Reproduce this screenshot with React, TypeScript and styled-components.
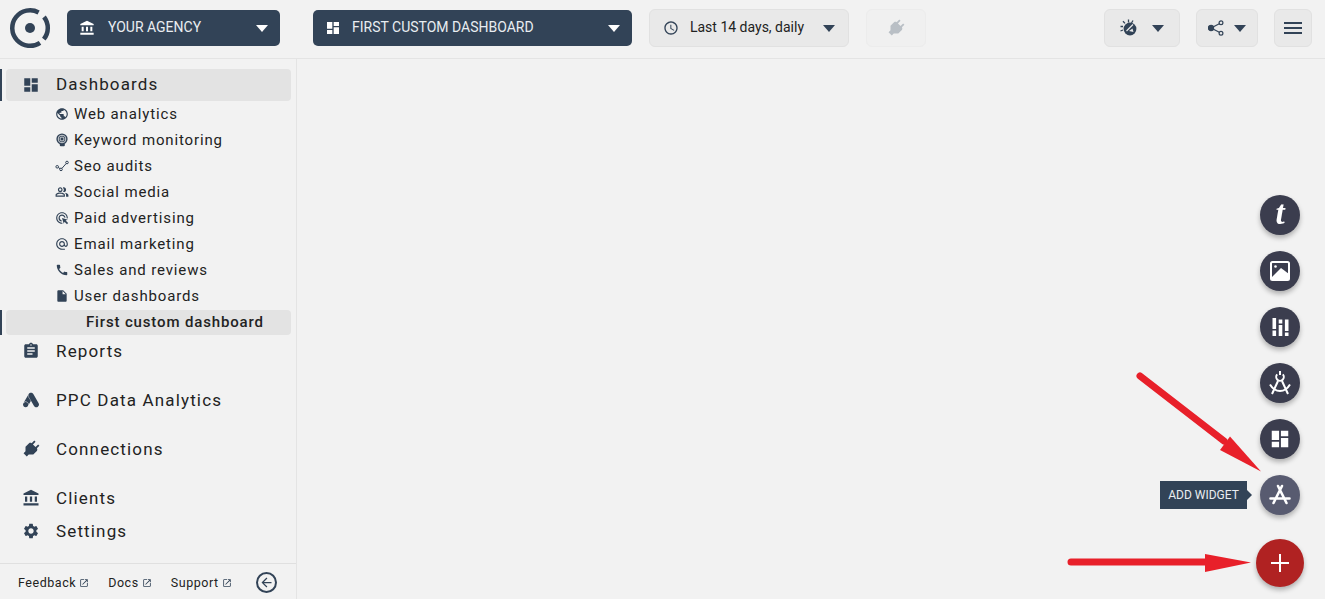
import React from "react";
import styled, { createGlobalStyle } from "styled-components";
import {
  MdAccountBalance,
  MdAccessTime,
  MdAlternateEmail,
  MdArrowBack,
  MdAssignment,
  MdCall,
  MdDashboard,
  MdInsertDriveFile,
  MdOpenInNew,
  MdOutlinePeopleAlt,
  MdPublic,
  MdSettings,
  MdPower,
  MdAdsClick,
} from "react-icons/md";
import { SiGoogleads } from "react-icons/si";

const navy = "#324357";

const GlobalStyle = createGlobalStyle`
  html, body { margin: 0; padding: 0; height: 100%; background: #f2f2f2; overflow: hidden; }
  body { font-family: Roboto, "Liberation Sans", sans-serif; color: #222; }
  * { box-sizing: border-box; }
`;

const Page = styled.div`
  width: 1325px;
  height: 599px;
  display: flex;
  flex-direction: column;
  background: #f2f2f2;
`;

const TopBar = styled.header`
  height: 59px;
  flex: none;
  display: flex;
  align-items: flex-start;
  border-bottom: 1px solid #e4e4e4;
`;

const LogoCell = styled.div`
  width: 67px;
  height: 58px;
  flex: none;
  display: flex;
  align-items: center;
  padding: 0 0 3px 9px;
`;

const DarkSelect = styled.button<{ $width: number; $gap: number; $labelGap: number }>`
  width: ${(p) => p.$width}px;
  height: 36px;
  margin: 10px ${(p) => p.$gap}px 0 0;
  padding: 0 12px 0 12px;
  flex: none;
  display: flex;
  align-items: center;
  background: ${navy};
  border: 0;
  border-radius: 5px;
  color: #e9edf1;
  font: 400 14px Roboto, sans-serif;
  text-transform: uppercase;
  svg.lead { width: 16px; height: 16px; margin-right: ${(p) => p.$labelGap}px; color: #fff; }
`;

const SelectLabel = styled.span`
  flex: 1;
  padding-bottom: 2px;
  text-align: left;
  white-space: nowrap;
`;

const Caret = styled.i<{ $color?: string }>`
  width: 0;
  height: 0;
  flex: none;
  border-left: 6px solid transparent;
  border-right: 6px solid transparent;
  border-top: 7px solid ${(p) => p.$color ?? navy};
`;

const LightButton = styled.button<{ $width: number; $gap: number; $faded?: boolean }>`
  width: ${(p) => p.$width}px;
  height: 38px;
  margin: 9px ${(p) => p.$gap}px 0 0;
  padding: 0;
  flex: none;
  display: flex;
  align-items: center;
  justify-content: center;
  background: ${(p) => (p.$faded ? "#f0f0f0" : "#e9e9e9")};
  border: 1px solid ${(p) => (p.$faded ? "#ececec" : "#e1e1e1")};
  border-radius: 6px;
  color: ${navy};
`;

const IconGap = styled.span<{ $width: number }>`
  width: ${(p) => p.$width}px;
`;

const DateLabel = styled.span`
  margin: 0 19px 2px 11px;
  color: #222;
  font: 400 14px Roboto, sans-serif;
  white-space: nowrap;
`;

const Body = styled.div`
  flex: 1;
  min-height: 0;
  display: flex;
`;

const Sidebar = styled.aside`
  width: 297px;
  flex: none;
  display: flex;
  flex-direction: column;
  border-right: 1px solid #e4e4e4;
`;

const Nav = styled.nav`
  flex: 1;
  padding-top: 10px;
`;

const MainRow = styled.a<{ $active?: boolean; $after?: number }>`
  position: relative;
  height: 32px;
  margin: 0 5px ${(p) => p.$after ?? 0}px 6px;
  padding: 0 0 ${(p) => (p.$active ? 2 : 0)}px 16px;
  display: flex;
  align-items: center;
  border-radius: 4px;
  background: ${(p) => (p.$active ? "#e3e3e3" : "transparent")};
  color: #222;
  font-size: 17px;
  letter-spacing: 1.15px;
  svg { width: 18px; height: 18px; flex: none; margin: ${(p) => (p.$active ? "2px" : "0")} 16px 0 0; color: ${navy}; }
  svg.plug { width: 22px; height: 22px; margin: 0 14px 0 -2px; }
  &::before {
    content: "";
    display: ${(p) => (p.$active ? "block" : "none")};
    position: absolute;
    left: -6px;
    top: 0;
    bottom: 0;
    width: 1.5px;
    background: ${navy};
  }
`;

const SubList = styled.div`
  padding: 0 0 0 55px;
`;

const SubRow = styled.a`
  height: 26px;
  display: flex;
  align-items: center;
  color: #222;
  font-size: 15px;
  letter-spacing: 0.85px;
  svg { width: 14px; height: 14px; flex: none; margin-right: 5px; color: ${navy}; }
`;

const ActiveSubRow = styled.a`
  position: relative;
  height: 25px;
  margin: 1px 5px 0 6px;
  padding: 0 0 1px 80px;
  display: flex;
  align-items: center;
  border-radius: 4px;
  background: #e3e3e3;
  color: #222;
  font-size: 15px;
  font-weight: 500;
  letter-spacing: 0.85px;
  &::before {
    content: "";
    position: absolute;
    left: -6px;
    top: 0;
    bottom: 0;
    width: 1.5px;
    background: ${navy};
  }
`;

const SidebarFooter = styled.footer`
  height: 36px;
  flex: none;
  padding: 2px 19px 0 18px;
  display: flex;
  align-items: center;
  border-top: 1px solid #e0e0e0;
`;

const FooterLink = styled.a<{ $gap: number }>`
  margin-right: ${(p) => p.$gap}px;
  display: flex;
  align-items: center;
  color: #222;
  font-size: 12.5px;
  letter-spacing: 0.55px;
  svg { width: 10px; height: 10px; margin-left: 3px; color: ${navy}; }
`;

const CollapseButton = styled.button`
  width: 21px;
  height: 21px;
  margin-left: auto;
  padding: 0;
  display: flex;
  align-items: center;
  justify-content: center;
  background: transparent;
  border: 2px solid ${navy};
  border-radius: 50%;
  color: ${navy};
  svg { width: 15px; height: 15px; }
`;

const Canvas = styled.main`
  flex: 1;
`;

const FabStack = styled.div`
  position: fixed;
  right: 21px;
  bottom: 12px;
  width: 48px;
  display: flex;
  flex-direction: column;
  align-items: center;
  gap: 16px;
`;

const Fab = styled.button<{ $hover?: boolean }>`
  position: relative;
  width: 40px;
  height: 40px;
  padding: 0;
  display: flex;
  align-items: center;
  justify-content: center;
  background: ${(p) => (p.$hover ? "#585b70" : "#3b3d4e")};
  border: 0;
  border-radius: 50%;
  color: #fff;
  box-shadow: 0 3px 5px rgba(0, 0, 0, 0.28);
`;

const AddFab = styled(Fab)`
  width: 48px;
  height: 48px;
  margin-top: 8px;
  background: #b02222;
`;

const FabLetter = styled.span`
  font: italic 700 33px "Liberation Serif", serif;
  line-height: 1;
  margin-bottom: 3px;
`;

const Tooltip = styled.span`
  position: absolute;
  right: 53px;
  top: 6px;
  width: 87px;
  height: 28px;
  display: flex;
  align-items: center;
  justify-content: center;
  background: ${navy};
  color: #e9edf1;
  font: 400 12px Roboto, sans-serif;
  white-space: nowrap;
  &::after {
    content: "";
    position: absolute;
    left: 100%;
    top: 9px;
    border-left: 5px solid ${navy};
    border-top: 5px solid transparent;
    border-bottom: 5px solid transparent;
  }
`;

const ArrowLayer = styled.svg`
  position: fixed;
  left: 0;
  top: 0;
  pointer-events: none;
`;

const Logo = () => (
  <svg width="42" height="42" viewBox="0 0 42 42">
    <path d="M29.6 5.400 A17.800 17.800 0 1 0 31 35.800" fill="none" stroke={navy} strokeWidth="4.500" />
    <path d="M35 10 A17.800 17.800 0 0 1 34.800 32.200" fill="none" stroke={navy} strokeWidth="4.500" />
    <circle cx="21" cy="21" r="5" fill={navy} />
  </svg>
);

const KeywordIcon = () => (
  <svg viewBox="0 0 14 14" fill="none">
    <circle cx="7" cy="6" r="5.600" fill="currentColor" />
    <circle cx="7" cy="6" r="3.800" stroke="#f2f2f2" strokeWidth=".8" />
    <circle cx="7" cy="6" r="2" stroke="#f2f2f2" strokeWidth=".8" />
    <path d="M4.800 11h5v1.200a1 1 0 0 1-1 1h-3a1 1 0 0 1-1-1z" fill="currentColor" />
  </svg>
);

const SeoIcon = () => (
  <svg viewBox="0 0 14 14" fill="none" stroke="currentColor" strokeWidth="1">
    <circle cx="2.200" cy="7.800" r="1.300" />
    <circle cx="6" cy="10.400" r="1.300" />
    <circle cx="12" cy="3.500" r="1.300" />
    <path d="M3.300 8.500l1.700 1.200M6.900 9.400l4.300-4.900" />
  </svg>
);

const ImageIcon = () => (
  <svg width="20" height="20" viewBox="0 0 20 20">
    <rect x="1" y="1" width="18" height="18" rx="1.500" fill="none" stroke="#fff" strokeWidth="2" />
    <circle cx="5.500" cy="5.500" r="1.300" fill="#fff" />
    <path d="M1 17L11 7l8 6v6H1z" fill="#fff" />
  </svg>
);

const SlidersIcon = () => (
  <svg width="17" height="18" viewBox="0 0 17 18" fill="#fff">
    <rect x="0.500" y="0" width="3.600" height="11" />
    <rect x="0.500" y="12.500" width="3.600" height="5.500" />
    <rect x="6.700" y="1.500" width="3.600" height="4" />
    <rect x="6.700" y="7" width="3.600" height="11" />
    <rect x="12.900" y="1.500" width="3.600" height="11.500" />
    <rect x="12.900" y="14.500" width="3.600" height="3.500" />
  </svg>
);

const CompassIcon = () => (
  <svg width="24" height="24" viewBox="0 0 24 24" fill="none" stroke="#fff" strokeWidth="2">
    <path d="M12 0v4" />
    <path d="M9.200 3.400a3.800 3.800 0 1 0 5.600 0" />
    <path d="M10 10L4 23M14 10l6 13" />
    <path d="M2 13.500C5 18.500 8 20 12 20s7-1.500 10-6.500" />
  </svg>
);

const AppStoreIcon = () => (
  <svg width="24" height="24" viewBox="0 0 24 24" fill="none" stroke="#fff" strokeWidth="2.600" strokeLinecap="round">
    <path d="M14 3L5.500 20M10 3L18.500 20M2.500 15.500H21.500" />
  </svg>
);

const WeatherIcon = () => (
  <svg width="18" height="18" viewBox="0 0 18 18" fill={navy}>
    <circle cx="10" cy="10" r="6.400" />
    <path d="M8.500.500v3M3 2.200l2 2.200M.500 7.500h2.500M.500 12l2.500-1M13 1.500l-1.500 2.500" stroke={navy} strokeWidth="1.300" />
    <path d="M13 5.500L6.500 12" stroke="#e9e9e9" strokeWidth="1.300" />
    <path d="M9 12l3.500-2.500 1 3.500z" fill="#e9e9e9" />
  </svg>
);

const ShareIcon = () => (
  <svg width="16" height="16" viewBox="0 0 16 16" fill="none" stroke={navy} strokeWidth="1.200">
    <circle cx="3" cy="8" r="2.600" fill={navy} />
    <circle cx="13" cy="2.800" r="1.900" />
    <circle cx="13" cy="13.200" r="1.900" />
    <path d="M5 7l6.300-3.300M5 9l6.300 3.300" />
  </svg>
);

const Hamburger = () => (
  <svg width="18" height="12" viewBox="0 0 18 12" fill={navy}>
    <rect y="0" width="18" height="2" />
    <rect y="5" width="18" height="2" />
    <rect y="10" width="18" height="2" />
  </svg>
);

const PlugIcon = ({ size, color }: { size?: number; color?: string }) => (
  <MdPower className="plug" size={size} color={color} style={{ transform: "rotate(45deg)" }} />
);

export default function App() {
  return (
    <Page>
      <GlobalStyle />
      <TopBar>
        <LogoCell>
          <Logo />
        </LogoCell>
        <DarkSelect $width={213} $gap={33} $labelGap={13}>
          <MdAccountBalance className="lead" />
          <SelectLabel>Your agency</SelectLabel>
          <Caret $color="#fff" />
        </DarkSelect>
        <DarkSelect $width={319} $gap={17} $labelGap={11}>
          <MdDashboard className="lead" />
          <SelectLabel>First custom dashboard</SelectLabel>
          <Caret $color="#fff" />
        </DarkSelect>
        <LightButton $width={200} $gap={17}>
          <MdAccessTime size={16} />
          <DateLabel>Last 14 days, daily</DateLabel>
          <Caret />
        </LightButton>
        <LightButton $width={60} $gap={178} $faded>
          <PlugIcon size={22} color="#b9bfc5" />
        </LightButton>
        <LightButton $width={76} $gap={16}>
          <WeatherIcon />
          <IconGap $width={14} />
          <Caret />
        </LightButton>
        <LightButton $width={62} $gap={16}>
          <ShareIcon />
          <IconGap $width={10} />
          <Caret />
        </LightButton>
        <LightButton $width={38} $gap={0}>
          <Hamburger />
        </LightButton>
      </TopBar>
      <Body>
        <Sidebar>
          <Nav>
            <MainRow $active>
              <MdDashboard />
              Dashboards
            </MainRow>
            <SubList>
              <SubRow><MdPublic />Web analytics</SubRow>
              <SubRow><KeywordIcon />Keyword monitoring</SubRow>
              <SubRow><SeoIcon />Seo audits</SubRow>
              <SubRow><MdOutlinePeopleAlt />Social media</SubRow>
              <SubRow><MdAdsClick />Paid advertising</SubRow>
              <SubRow><MdAlternateEmail />Email marketing</SubRow>
              <SubRow><MdCall />Sales and reviews</SubRow>
              <SubRow><MdInsertDriveFile />User dashboards</SubRow>
            </SubList>
            <ActiveSubRow>First custom dashboard</ActiveSubRow>
            <MainRow $after={17}>
              <MdAssignment />
              Reports
            </MainRow>
            <MainRow $after={17}>
              <SiGoogleads style={{ width: 16, height: 16, marginLeft: 1, marginRight: 17 }} />
              PPC Data Analytics
            </MainRow>
            <MainRow $after={17}>
              <PlugIcon />
              Connections
            </MainRow>
            <MainRow $after={1}>
              <MdAccountBalance />
              Clients
            </MainRow>
            <MainRow>
              <MdSettings />
              Settings
            </MainRow>
          </Nav>
          <SidebarFooter>
            <FooterLink $gap={19}>Feedback<MdOpenInNew /></FooterLink>
            <FooterLink $gap={19}>Docs<MdOpenInNew /></FooterLink>
            <FooterLink $gap={0}>Support<MdOpenInNew /></FooterLink>
            <CollapseButton><MdArrowBack /></CollapseButton>
          </SidebarFooter>
        </Sidebar>
        <Canvas />
      </Body>
      <FabStack>
        <Fab><FabLetter>t</FabLetter></Fab>
        <Fab><ImageIcon /></Fab>
        <Fab><SlidersIcon /></Fab>
        <Fab><CompassIcon /></Fab>
        <Fab><MdDashboard size={22} /></Fab>
        <Fab $hover>
          <Tooltip>ADD WIDGET</Tooltip>
          <AppStoreIcon />
        </Fab>
        <AddFab>
          <svg width="18" height="18" viewBox="0 0 18 18" fill="#fff">
            <rect x="8" y="0" width="2" height="18" />
            <rect x="0" y="8" width="18" height="2" />
          </svg>
        </AddFab>
      </FabStack>
      <ArrowLayer width="1325" height="599" viewBox="0 0 1325 599">
        <path d="M1140 376L1224 441" stroke="#e8202a" strokeWidth="7" strokeLinecap="round" />
        <path d="M1261 471.500L1220 450L1230 436.500Z" fill="#e8202a" />
        <path d="M1071 562H1206" stroke="#e8202a" strokeWidth="7" strokeLinecap="round" />
        <path d="M1251 562.500L1205 554V572Z" fill="#e8202a" />
      </ArrowLayer>
    </Page>
  );
}
